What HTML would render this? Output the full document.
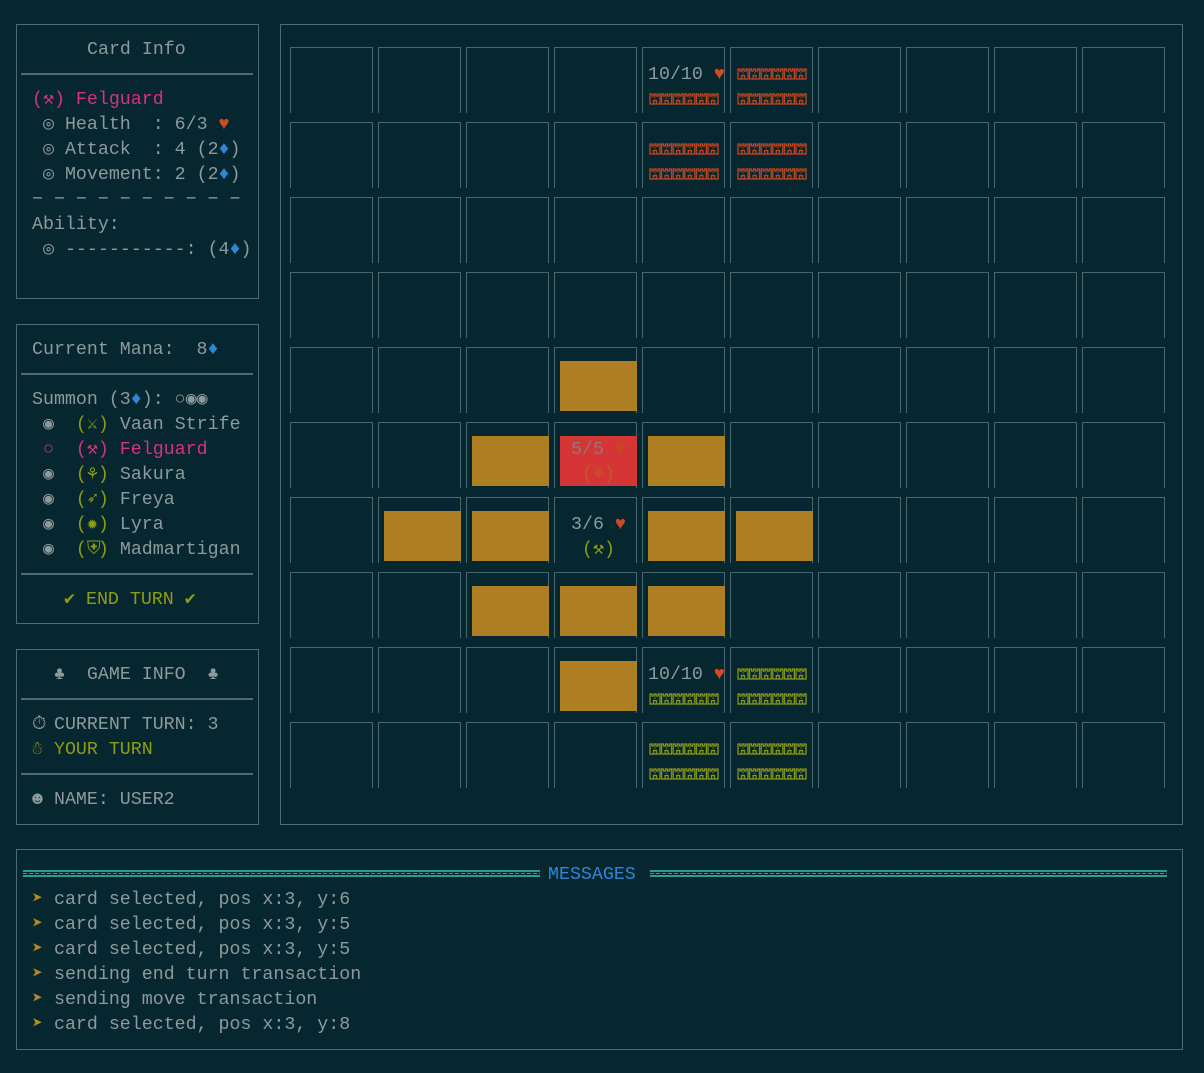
<!DOCTYPE html>
<html><head><meta charset="utf-8">
<style>
*{margin:0;padding:0;box-sizing:border-box}
body{width:1204px;height:1073px;background:#062630;position:relative;overflow:hidden;font-family:"Liberation Mono","DejaVu Sans Mono",monospace;font-size:18.3px;color:#8d9a9c}
.box{position:absolute;border:1.5px solid #4f6b71}
.hr{position:absolute;height:2px;background:#4f6b71}
.t{position:absolute;line-height:25px;white-space:pre}
.g{display:inline-block;width:11px;text-align:center;overflow:visible}
.pk{color:#d6337c}.ol{color:#8e9c12}.bl{color:#2f86d4}.ht{color:#d24a22}.gy{color:#8d9a9c}.yl{color:#b38a22}
.cell{position:absolute;width:83px;height:66px;border:1.5px solid #4a666c;border-bottom:none}
.fill{position:absolute;background:#ad7f22}
.cs{position:absolute;width:70px;height:13px}
</style></head><body>
<svg width="0" height="0" style="position:absolute">
<defs>
<pattern id="cr" width="11.6" height="13" patternUnits="userSpaceOnUse">
<path d="M1 12V2h2v2h2V2h2v2h2V2h2v10z M4.5 12V8.5h3V12 M5.5 6h1" fill="none" stroke="#c9471f" stroke-width="1.2"/>
</pattern>
<pattern id="cg" width="11.6" height="13" patternUnits="userSpaceOnUse">
<path d="M1 12V2h2v2h2V2h2v2h2V2h2v10z M4.5 12V8.5h3V12 M5.5 6h1" fill="none" stroke="#8e9c12" stroke-width="1.2"/>
</pattern>
</defs></svg>

<!-- Card info -->
<div class="box" style="left:16px;top:24px;width:243px;height:275px"></div>
<div class="t" style="left:87px;top:38px">Card Info</div>
<div class="hr" style="left:21px;top:73px;width:232px"></div>
<div class="t pk" style="left:32px;top:88px">(<span class="g">⚒</span>) Felguard</div>
<div class="t" style="left:32px;top:113px"> ◎ Health  : 6/3 <span class="ht">♥</span></div>
<div class="t" style="left:32px;top:138px"> ◎ Attack  : 4 (2<span class="bl">♦</span>)</div>
<div class="t" style="left:32px;top:163px"> ◎ Movement: 2 (2<span class="bl">♦</span>)</div>
<div class="t" style="left:32px;top:188px">− − − − − − − − − −</div>
<div class="t" style="left:32px;top:213px">Ability:</div>
<div class="t" style="left:32px;top:238px"> ◎ -----------: (4<span class="bl">♦</span>)</div>

<!-- Mana -->
<div class="box" style="left:16px;top:324px;width:243px;height:300px"></div>
<div class="t" style="left:32px;top:338px">Current Mana:  8<span class="bl">♦</span></div>
<div class="hr" style="left:21px;top:373px;width:232px"></div>
<div class="t" style="left:32px;top:388px">Summon (3<span class="bl">♦</span>): ○◉◉</div>
<div class="t" style="left:32px;top:413px"> ◉  <span class="ol">(<span class="g">⚔</span>)</span> Vaan Strife</div>
<div class="t pk" style="left:32px;top:438px"> ○  (<span class="g">⚒</span>) Felguard</div>
<div class="t" style="left:32px;top:463px"> ◉  <span class="ol">(<span class="g">⚘</span>)</span> Sakura</div>
<div class="t" style="left:32px;top:488px"> ◉  <span class="ol">(<span class="g">➶</span>)</span> Freya</div>
<div class="t" style="left:32px;top:513px"> ◉  <span class="ol">(<span class="g">✹</span>)</span> Lyra</div>
<div class="t" style="left:32px;top:538px"> ◉  <span class="ol">(<span class="g">⛨</span>)</span> Madmartigan</div>
<div class="hr" style="left:21px;top:573px;width:232px"></div>
<div class="t ol" style="left:64px;top:588px">✔ END TURN ✔</div>

<!-- Game info -->
<div class="box" style="left:16px;top:649px;width:243px;height:176px"></div>
<div class="t" style="left:54px;top:663px">♣  GAME INFO  ♣</div>
<div class="hr" style="left:21px;top:698px;width:232px"></div>
<div class="t" style="left:32px;top:713px"><span class="g">⏱</span> CURRENT TURN: 3</div>
<div class="t ol" style="left:32px;top:738px"><span class="g">☃</span> YOUR TURN</div>
<div class="hr" style="left:21px;top:773px;width:232px"></div>
<div class="t" style="left:32px;top:788px"><span class="g">☻</span> NAME: USER2</div>

<!-- Board -->
<div class="box" style="left:280px;top:24px;width:903px;height:801px"></div>
<div id="board"></div>

<!-- Messages -->
<div class="box" style="left:16px;top:849px;width:1167px;height:201px"></div>
<div style="position:absolute;left:23px;top:870px;width:517px;height:7px;border-top:2px solid #2a9c92;border-bottom:2px solid #2a9c92;background:repeating-linear-gradient(90deg,#2a9c92 0 4px,transparent 4px 6px) center/100% 1px no-repeat"></div>
<div style="position:absolute;left:650px;top:870px;width:517px;height:7px;border-top:2px solid #2a9c92;border-bottom:2px solid #2a9c92;background:repeating-linear-gradient(90deg,#2a9c92 0 4px,transparent 4px 6px) center/100% 1px no-repeat"></div>
<div class="t bl" style="left:548px;top:863px">MESSAGES</div>
<div class="t" style="left:32px;top:888px"><span class="yl">➤</span> card selected, pos x:3, y:6</div>
<div class="t" style="left:32px;top:913px"><span class="yl">➤</span> card selected, pos x:3, y:5</div>
<div class="t" style="left:32px;top:938px"><span class="yl">➤</span> card selected, pos x:3, y:5</div>
<div class="t" style="left:32px;top:963px"><span class="yl">➤</span> sending end turn transaction</div>
<div class="t" style="left:32px;top:988px"><span class="yl">➤</span> sending move transaction</div>
<div class="t" style="left:32px;top:1013px"><span class="yl">➤</span> card selected, pos x:3, y:8</div>

<script>
var b=document.getElementById('board'),h='';
function X(c){return 290+c*88}function Y(r){return 47+r*75}
for(var r=0;r<10;r++)for(var c=0;c<10;c++)h+='<div class="cell" style="left:'+X(c)+'px;top:'+Y(r)+'px"></div>';
var fills=[[3,4],[2,5],[4,5],[1,6],[2,6],[4,6],[5,6],[2,7],[3,7],[4,7],[3,8]];
fills.forEach(function(p){h+='<div class="fill" style="left:'+(X(p[0])+6)+'px;top:'+(Y(p[1])+14)+'px;width:77px;height:50px"></div>'});
h+='<div class="fill" style="background:#d53535;left:'+(X(3)+6)+'px;top:'+(Y(5)+14)+'px;width:77px;height:50px"></div>';
h+='<div class="t" style="left:'+(X(3)+17)+'px;top:'+(Y(5)+16)+'px;color:#8a7a78">5/5 <span style="color:#c9471f">♥</span></div>';
h+='<div class="t" style="left:'+(X(3)+28)+'px;top:'+(Y(5)+41)+'px;color:#c05a24">(<span class="g">⚘</span>)</div>';
h+='<div class="t" style="left:'+(X(3)+17)+'px;top:'+(Y(6)+16)+'px">3/6 <span class="ht">♥</span></div>';
h+='<div class="t ol" style="left:'+(X(3)+28)+'px;top:'+(Y(6)+41)+'px">(<span class="g">⚒</span>)</div>';
function cs(x,y,id){h+='<svg class="cs" style="left:'+x+'px;top:'+y+'px"><rect width="70" height="13" fill="url(#'+id+')"/></svg>'}
cs(X(5)+7,Y(0)+20,'cr');cs(X(4)+7,Y(0)+45,'cr');cs(X(5)+7,Y(0)+45,'cr');
cs(X(4)+7,Y(1)+20,'cr');cs(X(5)+7,Y(1)+20,'cr');cs(X(4)+7,Y(1)+45,'cr');cs(X(5)+7,Y(1)+45,'cr');
h+='<div class="t" style="left:'+(X(4)+6)+'px;top:'+(Y(0)+16)+'px">10/10 <span class="ht">♥</span></div>';
cs(X(5)+7,Y(8)+20,'cg');cs(X(4)+7,Y(8)+45,'cg');cs(X(5)+7,Y(8)+45,'cg');
cs(X(4)+7,Y(9)+20,'cg');cs(X(5)+7,Y(9)+20,'cg');cs(X(4)+7,Y(9)+45,'cg');cs(X(5)+7,Y(9)+45,'cg');
h+='<div class="t" style="left:'+(X(4)+6)+'px;top:'+(Y(8)+16)+'px">10/10 <span class="ht">♥</span></div>';
b.innerHTML=h;
</script>
</body></html>
